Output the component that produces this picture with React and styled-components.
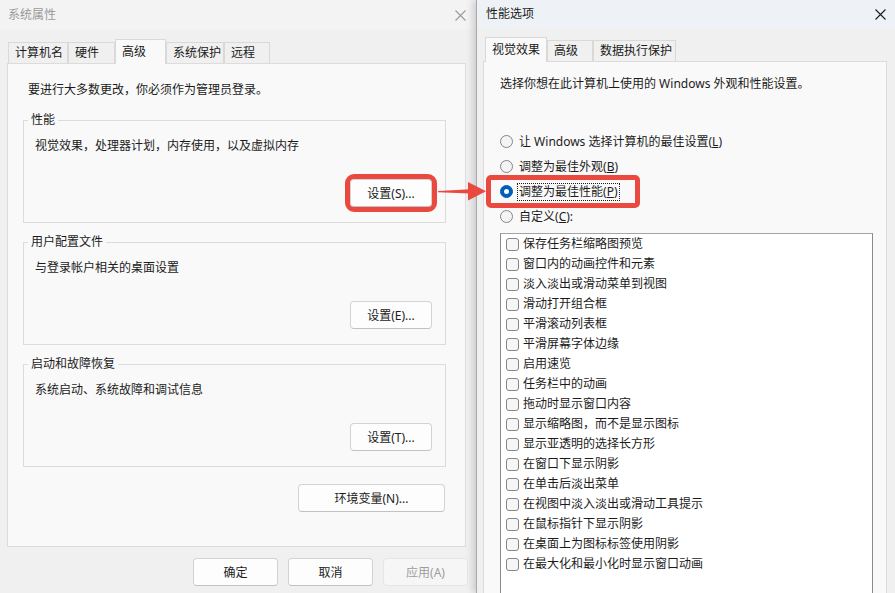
import React from 'react';
import styled, { createGlobalStyle } from 'styled-components';

const GlobalStyle = createGlobalStyle`
    html, body {
        margin: 0;
        padding: 0;
    }
    body {
        font-family: "Noto Sans", "Noto Sans CJK SC", sans-serif;
        font-size: 12px;
        color: #1b1b1b;
        background: #f0f0f0;
    }
`

const SCREEN = styled.div`
    position: relative;
    display: flex;
    width: 895px;
    height: 593px;
    overflow: hidden;
    background: #f0f0f0;
`

const LEFT_WINDOW = styled.div`
    display: flex;
    flex-direction: column;
    flex: 0 0 476px;
    background: #f0f0f0;
`

const RIGHT_WINDOW = styled.div`
    position: relative;
    z-index: 1;
    display: flex;
    flex-direction: column;
    flex: 1;
    background: #f0f0f0;
    border-left: 1px solid #a9a9a9;
    box-shadow: -3px 0 7px rgba(0, 0, 0, 0.16);
`

const TITLE_BAR = styled.div`
    flex-shrink: 0;
    display: flex;
    align-items: center;
    justify-content: space-between;
    height: ${p => p.$height}px;
    padding: 0 ${p => p.$padRight}px 0 ${p => p.$padLeft}px;
    background: ${p => p.$active ? '#eef2f6' : '#f3f3f3'};
    color: ${p => p.$active ? '#1b1b1b' : '#9a9a9a'};
    line-height: 16px;
`

const TAB_STRIP = styled.div`
    flex-shrink: 0;
    display: flex;
    align-items: flex-end;
    height: 24px;
    margin-top: ${p => p.$top}px;
    padding-left: ${p => p.$left}px;
`

const TAB = styled.div`
    box-sizing: border-box;
    position: relative;
    z-index: ${p => p.$selected ? 2 : 0};
    width: ${p => p.$width}px;
    height: ${p => p.$selected ? 25 : 21}px;
    margin-bottom: ${p => p.$selected ? -1 : 0}px;
    padding: ${p => p.$selected ? 2 : 0}px 0 0 6px;
    background: ${p => p.$selected ? '#f9f9f9' : '#f0f0f0'};
    border: 1px solid #d9d9d9;
    border-bottom: none;
    line-height: 19px;
    white-space: nowrap;
`

const PANEL = styled.div`
    flex-shrink: 0;
    box-sizing: border-box;
    height: ${p => p.$height}px;
    margin: 0 ${p => p.$right}px 0 ${p => p.$left}px;
    padding: ${p => p.$padTop}px 0 0;
    background: #f9f9f9;
    border: 1px solid #dcdcdc;
`

const INTRO = styled.div`
    line-height: 18px;
    padding-left: ${p => p.$indent}px;
    margin-bottom: ${p => p.$after}px;
`

const GROUP = styled.fieldset`
    margin: ${p => p.$first ? 0 : 11}px 19px 0 15px;
    padding: 0 13px 15px 11px;
    border: 1px solid #dcdcdc;
    min-inline-size: auto;
`

const LEGEND = styled.legend`
    margin-left: -7px;
    padding: 0 3px;
    line-height: 16px;
`

const GROUP_TEXT = styled.div`
    margin-top: 9px;
    line-height: 18px;
`

const BUTTON_ROW = styled.div`
    display: flex;
    justify-content: flex-end;
    gap: 10px;
    margin-top: ${p => p.$top}px;
    padding-right: ${p => p.$right || 0}px;
`

const BUTTON = styled.button`
    box-sizing: border-box;
    width: ${p => p.$width}px;
    height: 28px;
    padding: 0;
    font-family: inherit;
    font-size: 12px;
    color: ${p => p.disabled ? '#9d9d9d' : '#1b1b1b'};
    background: ${p => p.disabled ? '#f6f6f6' : '#fdfdfd'};
    border: 1px solid ${p => p.disabled ? '#e6e6e6' : '#d3d3d3'};
    border-bottom-color: ${p => p.disabled ? '#e6e6e6' : '#c2c2c2'};
    border-radius: 4px;
    outline: ${p => p.$highlight ? '5px solid #e9493f' : 'none'};
    outline-offset: 0;
`

const RADIO_GROUP = styled.div`
    display: flex;
    flex-direction: column;
    margin-top: 36px;
    padding-left: 16px;
`

const RADIO_ROW = styled.div`
    position: relative;
    display: flex;
    align-items: center;
    gap: 4px;
    height: 25px;
    line-height: 16px;
`

const RADIO = styled.span`
    box-sizing: border-box;
    position: relative;
    flex: 0 0 13px;
    width: 13px;
    height: 13px;
    border-radius: 50%;
    border: 1px solid ${p => p.$checked ? '#005fb8' : '#858585'};
    background: ${p => p.$checked ? '#005fb8' : '#f4f4f4'};

    &::after {
        content: '';
        display: ${p => p.$checked ? 'block' : 'none'};
        position: absolute;
        left: 3px;
        top: 3px;
        width: 5px;
        height: 5px;
        border-radius: 50%;
        background: #fff;
    }
`

const RADIO_LABEL = styled.span`
    padding: 0 1px;
    border: 1px dotted ${p => p.$focused ? '#1b1b1b' : 'transparent'};
`

const HIGHLIGHT = styled.div`
    position: absolute;
    left: -14px;
    top: -4px;
    width: 154px;
    height: 33px;
    box-sizing: border-box;
    border: 5px solid #e9493f;
    border-radius: 5px;
    pointer-events: none;
`

const CHECK_LIST = styled.div`
    height: 400px;
    margin: 4px 13px 0 16px;
    padding-left: 5px;
    background: #fff;
    border: 1px solid #8a8a8a;
    border-top-color: #a4a4a4;
`

const CHECK_ROW = styled.div`
    display: flex;
    align-items: center;
    gap: 4px;
    height: 20px;
    line-height: 16px;
`

const CHECKBOX = styled.span`
    box-sizing: border-box;
    flex: 0 0 13px;
    height: 13px;
    border: 1px solid #868686;
    border-radius: 3px;
    background: #f6f6f6;
`

const ARROW = styled.svg`
    position: absolute;
    left: 436px;
    top: 179px;
    z-index: 3;
`

const CloseIcon = ({ color }) => (
    <svg width="11" height="11" viewBox="0 0 11 11">
        <path d="M0.5 0.5 L10.5 10.5 M10.5 0.5 L0.5 10.5" stroke={color} strokeWidth="1.1" fill="none" />
    </svg>
)

const leftTabs = [
    { label: '计算机名', width: 60 },
    { label: '硬件', width: 47 },
    { label: '高级', width: 51, selected: true },
    { label: '系统保护', width: 58 },
    { label: '远程', width: 46 },
]

const rightTabs = [
    { label: '视觉效果', width: 62, selected: true },
    { label: '高级', width: 46 },
    { label: '数据执行保护', width: 83 },
]

const groups = [
    { title: '性能', text: '视觉效果，处理器计划，内存使用，以及虚拟内存', button: '设置(S)...', highlight: true },
    { title: '用户配置文件', text: '与登录帐户相关的桌面设置', button: '设置(E)...' },
    { title: '启动和故障恢复', text: '系统启动、系统故障和调试信息', button: '设置(T)...' },
]

const radios = [
    { text: '让 Windows 选择计算机的最佳设置', key: 'L' },
    { text: '调整为最佳外观', key: 'B' },
    { text: '调整为最佳性能', key: 'P', checked: true },
    { text: '自定义', key: 'C', colon: true },
]

const effects = [
    '保存任务栏缩略图预览',
    '窗口内的动画控件和元素',
    '淡入淡出或滑动菜单到视图',
    '滑动打开组合框',
    '平滑滚动列表框',
    '平滑屏幕字体边缘',
    '启用速览',
    '任务栏中的动画',
    '拖动时显示窗口内容',
    '显示缩略图，而不是显示图标',
    '显示亚透明的选择长方形',
    '在窗口下显示阴影',
    '在单击后淡出菜单',
    '在视图中淡入淡出或滑动工具提示',
    '在鼠标指针下显示阴影',
    '在桌面上为图标标签使用阴影',
    '在最大化和最小化时显示窗口动画',
]

const App = () => {
    return (
        <SCREEN>
            <GlobalStyle />

            <LEFT_WINDOW>
                <TITLE_BAR $height={30} $padLeft={8} $padRight={10}>
                    <span>系统属性</span>
                    <CloseIcon color="#9a9a9a" />
                </TITLE_BAR>

                <TAB_STRIP $top={9} $left={8}>
                    {leftTabs.map(t => (
                        <TAB key={t.label} $width={t.width} $selected={t.selected}>{t.label}</TAB>
                    ))}
                </TAB_STRIP>

                <PANEL $height={484} $left={7} $right={10} $padTop={17}>
                    <INTRO $indent={20} $after={13}>要进行大多数更改，你必须作为管理员登录。</INTRO>

                    {groups.map((g, i) => (
                        <GROUP key={g.title} $first={i === 0}>
                            <LEGEND>{g.title}</LEGEND>
                            <GROUP_TEXT>{g.text}</GROUP_TEXT>
                            <BUTTON_ROW $top={24}>
                                <BUTTON $width={82} $highlight={g.highlight}>{g.button}</BUTTON>
                            </BUTTON_ROW>
                        </GROUP>
                    ))}

                    <BUTTON_ROW $top={17} $right={20}>
                        <BUTTON $width={147}>环境变量(N)...</BUTTON>
                    </BUTTON_ROW>
                </PANEL>

                <BUTTON_ROW $top={11} $right={8}>
                    <BUTTON $width={85}>确定</BUTTON>
                    <BUTTON $width={85}>取消</BUTTON>
                    <BUTTON $width={85} disabled>应用(A)</BUTTON>
                </BUTTON_ROW>
            </LEFT_WINDOW>

            <RIGHT_WINDOW>
                <TITLE_BAR $active $height={28} $padLeft={9} $padRight={9}>
                    <span>性能选项</span>
                    <CloseIcon color="#1b1b1b" />
                </TITLE_BAR>

                <TAB_STRIP $top={9} $left={8}>
                    {rightTabs.map(t => (
                        <TAB key={t.label} $width={t.width} $selected={t.selected}>{t.label}</TAB>
                    ))}
                </TAB_STRIP>

                <PANEL $height={600} $left={6} $right={8} $padTop={13}>
                    <INTRO $indent={16} $after={0}>选择你想在此计算机上使用的 Windows 外观和性能设置。</INTRO>

                    <RADIO_GROUP>
                        {radios.map(r => (
                            <RADIO_ROW key={r.key}>
                                <RADIO $checked={r.checked} />
                                <RADIO_LABEL $focused={r.checked}>
                                    {r.text}(<u>{r.key}</u>){r.colon ? ':' : ''}
                                </RADIO_LABEL>
                                {r.checked && <HIGHLIGHT />}
                            </RADIO_ROW>
                        ))}
                    </RADIO_GROUP>

                    <CHECK_LIST>
                        {effects.map(e => (
                            <CHECK_ROW key={e}>
                                <CHECKBOX />
                                <span>{e}</span>
                            </CHECK_ROW>
                        ))}
                    </CHECK_LIST>
                </PANEL>
            </RIGHT_WINDOW>

            <ARROW width="52" height="25" viewBox="0 0 52 25">
                <path d="M2 12 L34 10.2 L34 14.4 L2 13.2 Z" fill="#e9493f" />
                <path d="M32 3 L50 12.3 L32 21.5 Z" fill="#e9493f" />
            </ARROW>
        </SCREEN>
    )
}

export default App;
